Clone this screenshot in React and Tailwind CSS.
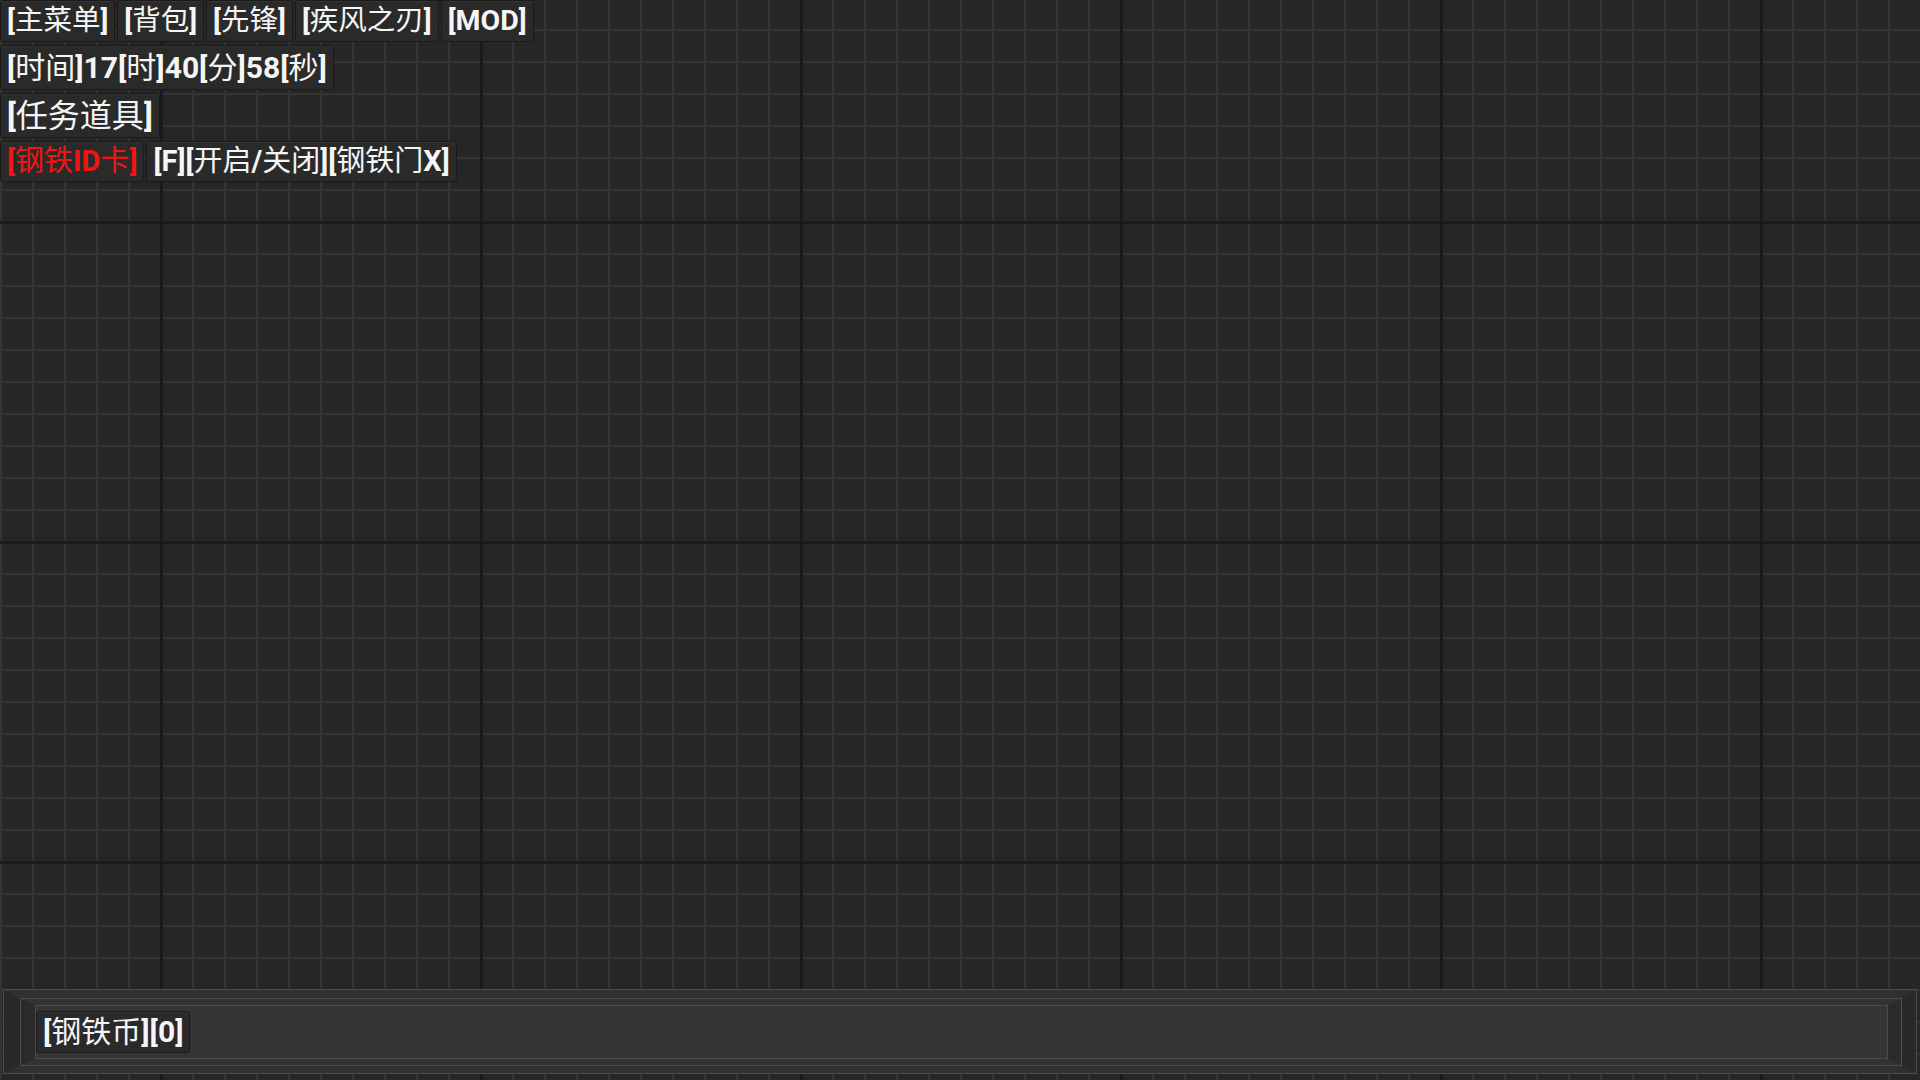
import React from "react";
import clsx from "clsx";

const CJK = /([\u3000-\u9fff\uff00-\uffef]+)/;

// latin glyphs are bold, chinese falls back to a regular weight like the game font
function Label({ text }) {
  return text.split(CJK).map((part, i) =>
    i % 2 === 1 ? (
      <span key={i} className="font-normal">
        {part}
      </span>
    ) : (
      <span key={i}>{part}</span>
    )
  );
}

function Chip({ text, className }) {
  return (
    <div
      className={clsx(
        "flex items-center rounded-[3px] border border-[#1a1a1a] bg-[#2a2a2a] px-[6px] leading-none font-bold whitespace-nowrap shadow-[inset_0_1px_0_#333]",
        className
      )}
    >
      <Label text={text} />
    </div>
  );
}

export default function App() {
  const menu = ["[主菜单]", "[背包]", "[先锋]", "[疾风之刃]", "[MOD]"];

  return (
    <div className="flex h-screen w-full flex-col overflow-hidden bg-[#262626] bg-[image:linear-gradient(to_right,#1b1b1b_3px,transparent_3px),linear-gradient(to_bottom,#1b1b1b_3px,transparent_3px),linear-gradient(to_right,#343434_2px,transparent_2px),linear-gradient(to_bottom,#343434_2px,transparent_2px)] bg-[size:320px_320px,320px_320px,32px_32px,32px_32px] bg-[position:160px_221px,160px_221px,0px_29px,0px_29px] font-[Roboto,'Noto_Sans_CJK_SC',sans-serif] text-[#f5f5f5]">
      <div className="flex flex-col items-start gap-[3px]">
        <div className="flex gap-[2px]">
          {menu.map((m) => (
            <Chip key={m} text={m} className="h-[42px] text-[28.5px]" />
          ))}
        </div>

        <Chip text="[时间]17[时]40[分]58[秒]" className="h-[45px] text-[30px]" />

        <Chip text="[任务道具]" className="h-[45px] text-[32px]" />

        <div className="flex gap-[2px]">
          <Chip text="[钢铁ID卡]" className="h-[41px] text-[29px] text-[#f21414]" />
          <Chip text="[F][开启/关闭][钢铁门X]" className="h-[41px] text-[29px]" />
        </div>
      </div>

      <div className="flex-1" />

      {/* bevelled bottom bar */}
      <div className="mx-[3px] mb-[6px] flex h-[85px] border border-[#4c4c4c]">
        <div className="flex flex-1 border-t-[8px] border-r-[14px] border-b-[7px] border-l-[16px] border-t-[#303030] border-r-[#292929] border-b-[#303030] border-l-[#292929]">
          <div className="flex flex-1 border border-[#4c4c4c]">
            <div className="flex flex-1 border-t-[6px] border-r-[13px] border-b-[6px] border-l-[14px] border-t-[#333333] border-r-[#2b2b2b] border-b-[#333333] border-l-[#2b2b2b]">
              <div className="flex flex-1 items-center border border-[#4c4c4c] bg-[#353535]">
                <Chip text="[钢铁币][0]" className="h-[42px] text-[30px]" />
              </div>
            </div>
          </div>
        </div>
      </div>
    </div>
  );
}
